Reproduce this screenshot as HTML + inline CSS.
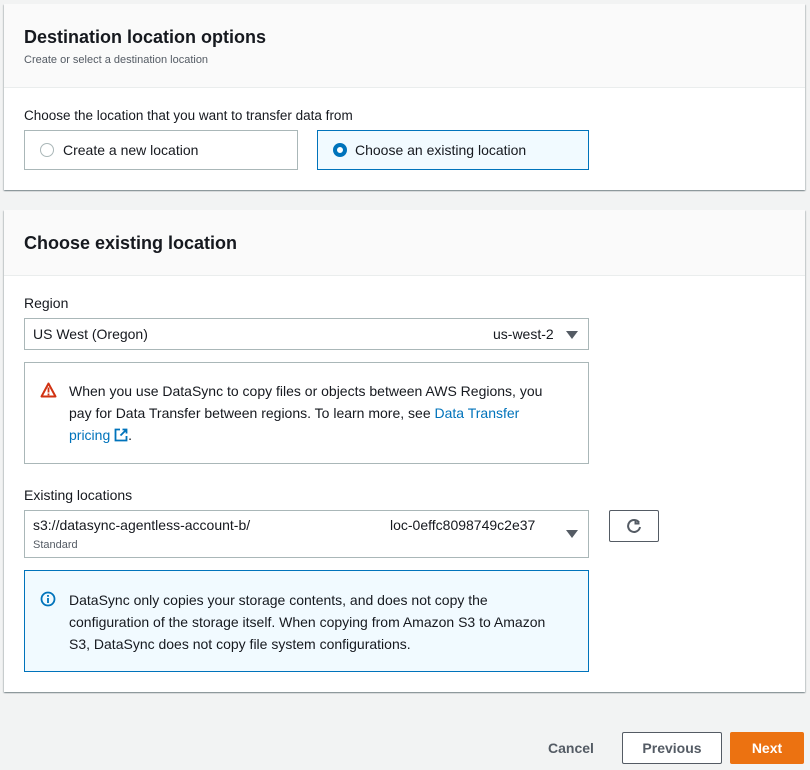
<!DOCTYPE html>
<html><head><style>
*{box-sizing:border-box;margin:0;padding:0}
body{width:810px;height:770px;background:#f2f3f3;font-family:"Liberation Sans",sans-serif;color:#16191f;position:relative;overflow:hidden;font-size:14px}
.a{position:absolute}
.panel{position:absolute;left:4px;width:801px;background:#fff;box-shadow:0 1px 1px rgba(0,28,36,.3),1px 1px 1px rgba(0,28,36,.15),-1px 1px 1px rgba(0,28,36,.15)}
.hd{position:absolute;left:0;top:0;width:100%;background:#fafafa;border-bottom:1px solid #eaeded}
h2{font-size:18px;font-weight:bold;position:absolute;left:20px}
.box{position:absolute;border:1px solid #aab7b8;background:#fff}
.radio{position:absolute;width:14px;height:14px;border-radius:50%;border:1px solid #aab7b8}
.link{color:#0073bb}
.btn{position:absolute;font-weight:bold;font-size:14px;text-align:center;border-radius:2px}
</style></head><body>
<div class="panel" style="top:4px;height:186px">
 <div class="hd" style="height:84px">
  <h2 style="top:23px">Destination location options</h2>
  <div class="a" style="left:20px;top:50px;font-size:11px;color:#545b64">Create or select a destination location</div>
 </div>
 <div class="a" style="left:20px;top:104px;font-size:13.5px">Choose the location that you want to transfer data from</div>
 <div class="box" style="left:20px;top:126px;width:274px;height:40px"><div class="radio" style="left:15px;top:12px"></div><div class="a" style="left:38px;top:11px">Create a new location</div></div>
 <div class="box" style="left:313px;top:126px;width:272px;height:40px;border-color:#0073bb;background:#f1faff"><div class="radio" style="left:15px;top:12px;border:4px solid #0073bb;background:#fff"></div><div class="a" style="left:37px;top:11px">Choose an existing location</div></div>
</div>
<div class="panel" style="top:210px;height:482px">
 <div class="hd" style="height:66px"><h2 style="top:23px">Choose existing location</h2></div>
 <div class="a" style="left:20px;top:85px">Region</div>
 <div class="box" style="left:20px;top:108px;width:565px;height:32px"><div class="a" style="left:8px;top:7px">US West (Oregon)</div><div class="a" style="left:468px;top:7px">us-west-2</div><div class="a" style="left:541px;top:12px;width:0;height:0;border-left:6px solid transparent;border-right:6px solid transparent;border-top:8px solid #545b64"></div></div>
 <div class="box" style="left:20px;top:152px;width:565px;height:102px">
  <svg class="a" style="left:15px;top:19px" width="17" height="16" viewBox="0 0 17 16"><path d="M8.5 1.5L1.5 14.5h14z" fill="none" stroke="#d13212" stroke-width="2" stroke-linejoin="round"/><rect x="7.6" y="5.5" width="1.8" height="5" fill="#d13212"/><rect x="7.6" y="11.5" width="1.8" height="1.8" fill="#d13212"/></svg>
  <div class="a" style="left:44px;top:17px;width:520px;line-height:22px;font-size:14px;white-space:nowrap">When you use DataSync to copy files or objects between AWS Regions, you<br>pay for Data Transfer between regions. To learn more, see <span class="link">Data Transfer</span><br><span class="link">pricing <svg width="14" height="14" viewBox="0 0 14 14" style="vertical-align:-2px"><path d="M6 1.5H1.5v11h11V8M8.5 1.5h4v4M12.5 1.5L6.5 7.5" fill="none" stroke="#0073bb" stroke-width="1.8"/></svg></span>.</div>
 </div>
 <div class="a" style="left:20px;top:277px">Existing locations</div>
 <div class="box" style="left:20px;top:300px;width:565px;height:48px"><div class="a" style="left:8px;top:6px">s3://datasync-agentless-account-b/</div><div class="a" style="left:8px;top:28px;font-size:11px;color:#545b64">Standard</div><div class="a" style="left:365px;top:6px">loc-0effc8098749c2e37</div><div class="a" style="left:541px;top:19px;width:0;height:0;border-left:6px solid transparent;border-right:6px solid transparent;border-top:8px solid #545b64"></div></div>
 <div class="box" style="left:605px;top:300px;width:50px;height:32px;border-color:#545b64;border-radius:2px"><svg class="a" style="left:16px;top:7px" width="16" height="16" viewBox="0 0 16 16"><path d="M13 4.5A6 6 0 1 0 14 9" fill="none" stroke="#545b64" stroke-width="2"/><path d="M9.5 1.5v4h4" fill="none" stroke="#545b64" stroke-width="2"/></svg></div>
 <div class="box" style="left:20px;top:360px;width:565px;height:102px;border-color:#0073bb;background:#f1faff">
  <svg class="a" style="left:15px;top:20px" width="16" height="16" viewBox="0 0 16 16"><circle cx="8" cy="8" r="6.5" fill="none" stroke="#0073bb" stroke-width="1.8"/><rect x="7.1" y="7" width="1.8" height="5" fill="#0073bb"/><rect x="7.1" y="4" width="1.8" height="1.8" fill="#0073bb"/></svg>
  <div class="a" style="left:44px;top:18px;width:520px;line-height:22px;font-size:14px;white-space:nowrap">DataSync only copies your storage contents, and does not copy the<br>configuration of the storage itself. When copying from Amazon S3 to Amazon<br>S3, DataSync does not copy file system configurations.</div>
 </div>
</div>
<div class="btn" style="left:548px;top:740px;color:#545b64">Cancel</div>
<div class="btn" style="left:622px;top:732px;width:100px;height:32px;border:1px solid #545b64;background:#fff;color:#545b64;line-height:30px">Previous</div>
<div class="btn" style="left:730px;top:732px;width:74px;height:32px;background:#ec7211;color:#fff;line-height:32px">Next</div>
</body></html>
